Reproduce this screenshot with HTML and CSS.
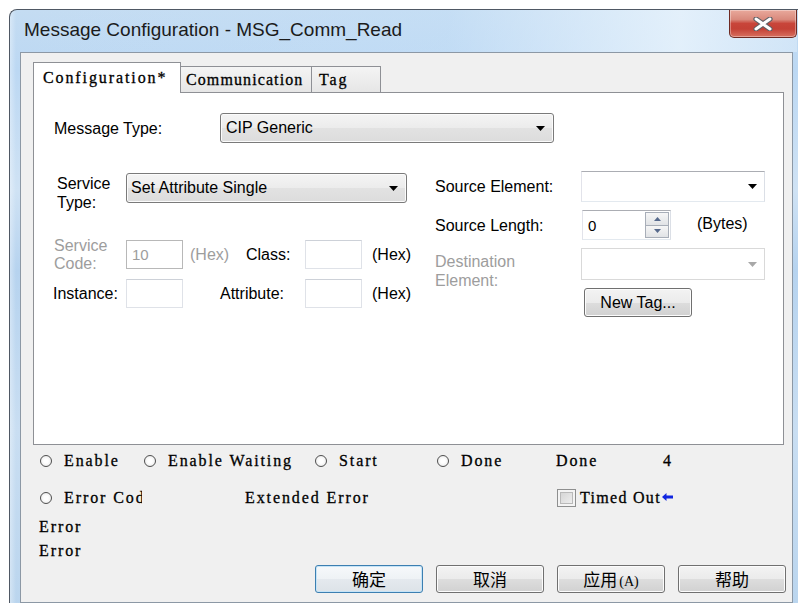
FILE: index.html
```html
<!DOCTYPE html>
<html lang="en">
<head>
<meta charset="utf-8">
<title>Message Configuration - MSG_Comm_Read</title>
<link rel="stylesheet" href="styles.css">
</head>
<body>
<div class="window">
  <div class="titlebar">
    <span class="title">Message Configuration - MSG_Comm_Read</span>
    <button class="close" type="button" aria-label="Close">
      <svg width="20" height="14" viewBox="0 0 20 14">
        <path d="M3 2 L17 12 M17 2 L3 12" stroke="#5d6066" stroke-width="5.2" stroke-linecap="round" fill="none"/>
        <path d="M3 2 L17 12 M17 2 L3 12" stroke="#ffffff" stroke-width="3" stroke-linecap="round" fill="none"/>
      </svg>
    </button>
  </div>

  <div class="client">
    <div class="tabs">
      <div class="tab tab-active">Configuration*</div>
      <div class="tab tab-comm">Communication</div>
      <div class="tab tab-tag">Tag</div>
    </div>

    <div class="panel">
      <div class="msg-row">
        <span class="lbl msg-lbl">Message Type:</span>
        <div class="combo combo-msg">
          <span>CIP Generic</span>
          <svg class="arrow" width="9" height="5" viewBox="0 0 9 5"><path d="M0 0H9L4.5 5Z"/></svg>
        </div>
      </div>

      <div class="cols">
        <div class="left">
          <div class="svc-row">
            <span class="lbl svc-lbl">Service<br>Type:</span>
            <div class="combo combo-svc">
              <span>Set Attribute Single</span>
              <svg class="arrow" width="9" height="5" viewBox="0 0 9 5"><path d="M0 0H9L4.5 5Z"/></svg>
            </div>
          </div>
          <div class="field-row row-code">
            <span class="lbl lbl-code dis">Service<br>Code:</span>
            <div class="box box-dis">10</div>
            <span class="lbl hex1 dis">(Hex)</span>
            <span class="lbl cls-lbl">Class:</span>
            <div class="box"></div>
            <span class="lbl hex2">(Hex)</span>
          </div>
          <div class="field-row row-inst">
            <span class="lbl lbl-inst">Instance:</span>
            <div class="box"></div>
            <span class="lbl attr-lbl">Attribute:</span>
            <div class="box"></div>
            <span class="lbl hex2">(Hex)</span>
          </div>
        </div>

        <div class="right">
          <div class="r-row">
            <span class="lbl r-lbl">Source Element:</span>
            <div class="edit-combo">
              <svg class="arrow" width="9" height="5" viewBox="0 0 9 5"><path d="M0 0H9L4.5 5Z"/></svg>
            </div>
          </div>
          <div class="r-row r-len">
            <span class="lbl r-lbl len-lbl">Source Length:</span>
            <div class="spin">
              <span class="spin-val">0</span>
              <div class="spin-btns">
                <div class="spin-btn"><svg width="7" height="4" viewBox="0 0 7 4"><path d="M0 4H7L3.5 0Z"/></svg></div>
                <div class="spin-btn"><svg width="7" height="4" viewBox="0 0 7 4"><path d="M0 0H7L3.5 4Z"/></svg></div>
              </div>
            </div>
            <span class="lbl bytes">(Bytes)</span>
          </div>
          <div class="r-row r-dest">
            <span class="lbl r-lbl dest-lbl dis">Destination<br>Element:</span>
            <div class="edit-combo edit-dis">
              <svg class="arrow" width="9" height="5" viewBox="0 0 9 5"><path d="M0 0H9L4.5 5Z"/></svg>
            </div>
          </div>
          <button class="btn newtag" type="button">New Tag...</button>
        </div>
      </div>
    </div>

    <div class="status">
      <div class="st-row st-row1">
        <div class="cell c1"><span class="radio"></span>Enable</div>
        <div class="cell c2"><span class="radio"></span>Enable Waiting</div>
        <div class="cell c3"><span class="radio"></span>Start</div>
        <div class="cell c4"><span class="radio"></span>Done</div>
        <div class="cell c5">Done</div>
        <div class="cell c6">4</div>
      </div>
      <div class="st-row st-row2">
        <div class="cell d1"><span class="radio"></span><span class="clip">Error Code</span></div>
        <div class="cell d2">Extended Error</div>
        <div class="cell d3"><span class="check"></span><span class="timed">Timed Out</span><svg class="back" width="11" height="8" viewBox="0 0 11 8"><path d="M0 4L4.5 0V2.6H11V5.4H4.5V8Z"/></svg></div>
      </div>
      <div class="err err-first">Error</div>
      <div class="err">Error</div>
      <div class="actions">
        <button class="btn dlg default" type="button">确定</button>
        <button class="btn dlg" type="button">取消</button>
        <button class="btn dlg" type="button">应用<span class="acc">(A)</span></button>
        <button class="btn dlg" type="button">帮助</button>
      </div>
    </div>
  </div>
</div>
</body>
</html>
```

FILE: styles.css
```css
html, body {
  margin: 0;
  padding: 0;
  background: #ffffff;
  overflow: hidden;
}

body {
  width: 798px;
  height: 605px;
}

/* ---------- window frame ---------- */
.window {
  box-sizing: border-box;
  margin: 9px 0 0 9px;
  width: 789px;
  height: 594px;
  border-top: 1px solid #4f5864;
  border-left: 1px solid #4f5864;
  border-top-left-radius: 8px;
  padding: 0 5px 0 10px;
  display: flex;
  flex-direction: column;
  background:
    linear-gradient(to right, rgba(255,255,255,0.35), rgba(255,255,255,0) 6px),
    linear-gradient(to bottom, #c4dcf2 0px, #bcd8f3 60px, #cfe2f4 180px, #b6d3ef 260px, #c9def2 420px, #bad5ee 600px);
}

.titlebar {
  height: 42px;
  display: flex;
  align-items: flex-start;
  justify-content: space-between;
  margin-right: -4px;
  background: linear-gradient(to right, rgba(255,255,255,0) 0%, rgba(200,226,250,0.3) 55%, rgba(235,245,253,0.8) 85%, rgba(220,236,250,0.6) 100%);
}

.title {
  margin: 8px 0 0 4px;
  font-family: "Liberation Sans", Arial, sans-serif;
  font-size: 19px;
  line-height: 24px;
  color: #1b1b1b;
  white-space: nowrap;
}

.close {
  width: 68px;
  height: 28px;
  margin: 0;
  padding: 0;
  border: 1px solid #6e2a22;
  border-top: 0;
  border-radius: 0 0 5px 5px;
  background: linear-gradient(to bottom, #e9a99c 0%, #d98a7d 35%, #c8453a 50%, #c44136 70%, #d8705f 100%);
  box-shadow: inset 0 0 0 1px rgba(255,255,255,0.35);
  display: flex;
  align-items: center;
  justify-content: center;
}

/* ---------- client area ---------- */
.client {
  flex: 1;
  box-sizing: border-box;
  border: 1px solid #8c98a5;
  background: #f0f0f0;
  padding: 10px 0 0 12px;
  display: flex;
  flex-direction: column;
  font-family: "Liberation Sans", Arial, sans-serif;
}

.tabs,
.status {
  font-family: "Liberation Serif", "Times New Roman", serif;
  font-size: 16px;
  letter-spacing: 1.9px;
  color: #000;
  -webkit-text-stroke: 0.3px #000;
}

/* tabs */
.tabs {
  display: flex;
  align-items: flex-end;
  height: 29px;
}

.tab {
  box-sizing: border-box;
  height: 26px;
  line-height: 25px;
  border: 1px solid #8e9095;
  border-bottom: 0;
  background: linear-gradient(to bottom, #f4f4f4, #e6e6e6);
  white-space: nowrap;
}

.tab-active {
  position: relative;
  z-index: 1;
  width: 148px;
  height: 31px;
  line-height: 29px;
  margin-bottom: -1px;
  padding-left: 9px;
  background: #ffffff;
}

.tab-comm {
  width: 132px;
  margin-left: -1px;
  padding-left: 5px;
  letter-spacing: 1.1px;
}

.tab-tag {
  width: 70px;
  margin-left: -1px;
  padding-left: 7px;
}

.panel {
  box-sizing: border-box;
  width: 751px;
  height: 353px;
  border: 1px solid #8e9095;
  background: #ffffff;
  padding: 20px 0 0 20px;
}

.lbl {
  font-size: 16px;
  line-height: 19px;
  color: #000;
  white-space: nowrap;
}

.dis {
  color: #9d9d9d;
}

.msg-row {
  display: flex;
  align-items: center;
  height: 30px;
}

.msg-lbl {
  width: 166px;
}

/* drop-down (read-only) list */
.combo {
  box-sizing: border-box;
  height: 30px;
  border: 1px solid #7a7a7a;
  border-radius: 3px;
  background: linear-gradient(to bottom, #f4f4f4 0%, #ececec 50%, #e2e2e2 51%, #dcdcdc 100%);
  box-shadow: inset 0 0 0 1px #fbfbfb;
  display: flex;
  align-items: center;
  justify-content: space-between;
  font-size: 16px;
  color: #000;
}

.combo-msg {
  width: 334px;
  padding: 0 8px 0 5px;
}

.combo-svc {
  width: 281px;
  padding: 0 8px 0 4px;
}

.arrow path {
  fill: #000;
}

.cols {
  display: flex;
  margin-top: 30px;
}

.left {
  width: 381px;
}

.svc-row {
  display: flex;
  align-items: flex-start;
  height: 30px;
}

.svc-lbl {
  box-sizing: border-box;
  width: 72px;
  padding: 1px 0 0 3px;
}

.field-row {
  display: flex;
  align-items: center;
  height: 29px;
}

.row-code {
  margin-top: 37px;
}

.row-inst {
  margin-top: 10px;
}

.lbl-code {
  width: 72px;
  line-height: 18px;
}

.lbl-inst {
  width: 73px;
  margin-left: -1px;
}

.box {
  box-sizing: border-box;
  width: 57px;
  height: 29px;
  border: 1px solid #dfe2e8;
  border-top-color: #cdd1d8;
  background: #fff;
  font-size: 15px;
  line-height: 27px;
  padding-left: 5px;
}

.box-dis {
  border-color: #b8b8b8;
  color: #9d9d9d;
}

.hex1 {
  width: 56px;
  padding-left: 7px;
}

.cls-lbl {
  width: 59px;
}

.hex2 {
  padding-left: 10px;
}

.attr-lbl {
  box-sizing: border-box;
  width: 122px;
  padding-left: 37px;
}

.right {
  margin-top: -2px;
}

.r-row {
  display: flex;
  align-items: center;
}

.r-lbl {
  width: 146px;
}

.len-lbl {
  width: 147px;
}

.r-len {
  margin-top: 8px;
}

.r-dest {
  margin-top: 8px;
  height: 32px;
  align-items: flex-start;
}

.dest-lbl {
  padding-top: 4px;
}

/* editable combo / text box */
.edit-combo {
  box-sizing: border-box;
  width: 184px;
  height: 31px;
  border: 1px solid;
  border-color: #abadb3 #dbdfe6 #e3e9ef #e2e3ea;
  background: #fff;
  display: flex;
  align-items: center;
  justify-content: flex-end;
  padding-right: 7px;
}

.r-dest .edit-combo {
  height: 32px;
}

.edit-dis {
  border-color: #d9d9d9;
}

.edit-dis .arrow path {
  fill: #a8a8a8;
}

.spin {
  box-sizing: border-box;
  width: 89px;
  height: 30px;
  border: 1px solid;
  border-color: #abadb3 #dbdfe6 #e3e9ef #e2e3ea;
  background: #fff;
  display: flex;
  align-items: center;
  justify-content: space-between;
  padding: 1px 1px 1px 5px;
}

.spin-val {
  font-size: 15px;
}

.spin-btns {
  width: 24px;
  height: 26px;
  display: flex;
  flex-direction: column;
}

.spin-btn {
  box-sizing: border-box;
  flex: 1;
  border: 1px solid #a8aeb8;
  background: linear-gradient(to bottom, #f6f6f6, #e1e3e6);
  display: flex;
  align-items: center;
  justify-content: center;
}

.spin-btn + .spin-btn {
  border-top: 0;
}

.spin-btn path {
  fill: #56698c;
}

.bytes {
  margin-left: 26px;
  margin-top: -3px;
}

/* push buttons */
.btn {
  box-sizing: border-box;
  border: 1px solid #707070;
  border-radius: 3px;
  background: linear-gradient(to bottom, #f3f3f3 0%, #ebebeb 50%, #dddddd 51%, #d1d1d1 100%);
  box-shadow: inset 0 0 0 1px #fcfcfc;
  color: #000;
  padding: 0;
  margin: 0;
}

.newtag {
  display: block;
  width: 108px;
  height: 29px;
  margin: 8px 0 0 149px;
  font-family: "Liberation Sans", Arial, sans-serif;
  font-size: 16px;
}

/* ---------- status block ---------- */
.status {
  padding-left: 7px;
}

.st-row {
  display: flex;
  align-items: center;
  height: 20px;
}

.st-row1 {
  margin-top: 6px;
}

.st-row2 {
  margin-top: 17px;
}

.cell {
  display: flex;
  align-items: center;
  white-space: nowrap;
}

.c1 { width: 104px; }
.c2 { width: 171px; }
.c3 { width: 122px; }
.c4 { width: 119px; }
.c5 { width: 107px; }

.d1 { width: 205px; }
.d2 { width: 312px; }

.radio {
  box-sizing: border-box;
  width: 12px;
  height: 12px;
  margin-right: 12px;
  border-radius: 50%;
  border: 1.5px solid #4f4f4f;
  background: radial-gradient(circle at 50% 50%, #ffffff 30%, #e4e4e4 100%);
}

.clip {
  display: inline-block;
  width: 78px;
  overflow: hidden;
}

.check {
  box-sizing: border-box;
  width: 19px;
  height: 18px;
  margin-right: 4px;
  border: 1px solid #8e8f8f;
  background: linear-gradient(135deg, #cfcfcf, #f4f4f4);
  box-shadow: inset 0 0 0 2px #f4f4f4, inset 0 0 0 3px #b9b9b9;
}

.timed {
  letter-spacing: 1.3px;
}

.back {
  margin-left: 1px;
  margin-top: -2px;
}

.back path {
  fill: #1026e0;
}

.err {
  margin-left: -1px;
  line-height: 24px;
}

.err-first {
  margin-top: 7px;
}

.actions {
  display: flex;
  gap: 13px;
  margin: 2px 0 0 275px;
  letter-spacing: 0;
  -webkit-text-stroke: 0;
}

.dlg {
  width: 108px;
  height: 28px;
  font-family: "Noto Sans CJK SC", sans-serif;
  font-size: 17px;
  line-height: 26px;
  font-weight: normal;
}

.default {
  border-color: #3c7fb1;
  background: linear-gradient(to bottom, #f6f9fb 0%, #eef2f5 50%, #e4e9ee 51%, #dde3e8 100%);
  box-shadow: inset 0 0 0 1px #c6e4f7;
}

.acc {
  font-family: "Liberation Serif", serif;
  font-size: 14px;
  margin-left: 2px;
}
```
